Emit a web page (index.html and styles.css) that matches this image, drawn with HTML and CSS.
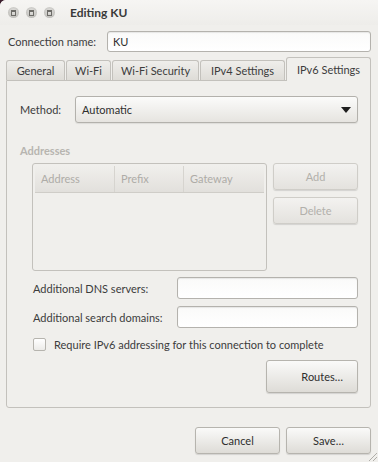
FILE: index.html
```html
<!DOCTYPE html>
<html lang="en">
<head>
    <meta charset="UTF-8">
    <title>Editing KU</title>
    <link rel="stylesheet" href="styles.css">
</head>
<body>
    <div class="window">
        <div class="titlebar">
            <div class="wbtns">
                <span class="wbtn"></span>
                <span class="wbtn"></span>
                <span class="wbtn"></span>
            </div>
            <span class="title">Editing KU</span>
        </div>

        <div class="namerow">
            <label>Connection name:</label>
            <div class="entry name">KU</div>
        </div>

        <div class="tabs">
            <div class="tab t1">General</div>
            <div class="tab t2">Wi-Fi</div>
            <div class="tab t3">Wi-Fi Security</div>
            <div class="tab t4">IPv4 Settings</div>
            <div class="tab active">IPv6 Settings</div>
        </div>

        <div class="panel">
            <div class="methodrow">
                <label>Method:</label>
                <div class="combo">
                    <span>Automatic</span>
                    <svg width="12" height="8" viewBox="0 0 12 8"><path d="M1 1h10L6 7z" fill="#1e1e1e"/></svg>
                </div>
            </div>

            <div class="heading">Addresses</div>

            <div class="addrs">
                <div class="table">
                    <div class="thead">
                        <div class="th c1">Address</div>
                        <div class="th c2">Prefix</div>
                        <div class="th c3">Gateway</div>
                    </div>
                </div>
                <div class="side">
                    <button class="btn dis">Add</button>
                    <button class="btn dis">Delete</button>
                </div>
            </div>

            <div class="field">
                <label>Additional DNS servers:</label>
                <div class="entry"></div>
            </div>
            <div class="field">
                <label>Additional search domains:</label>
                <div class="entry"></div>
            </div>

            <div class="check">
                <span class="box"></span>
                <span>Require IPv6 addressing for this connection to complete</span>
            </div>

            <div class="routesrow">
                <button class="btn routes">Routes…</button>
            </div>
        </div>

        <div class="actions">
            <button class="btn act">Cancel</button>
            <button class="btn act">Save…</button>
        </div>
        <div class="grip"></div>
    </div>
</body>
</html>
```

FILE: styles.css
```css
body{
    margin:0;
    padding:0;
    background-color: #3c1f2e;
    font-family: Lato, "Noto Sans", sans-serif;
    font-size: 11px;
    color: #3c3c3c;
}

.window{
    width:378px;
    height:462px;
    background-color: #f0efec;
    border-top-left-radius: 6px;
    position: relative;
    overflow: hidden;
}

.titlebar{
    height:25px;
    display: flex;
    align-items: center;
    background: linear-gradient(#f6f5f3, #eeedea);
}
.wbtns{
    display: flex;
    gap:7px;
    margin-left:8px;
}
.wbtn{
    width:11px;
    height:11px;
    border-radius: 50%;
    background: radial-gradient(circle at 50% 40%, #e4e3e0, #b3b2ae);
    position: relative;
}
.wbtn::after{
    content:"";
    position: absolute;
    left:3px;
    top:3px;
    width:3px;
    height:3px;
    border:1px solid #6d6c68;
    border-top-width: 2px;
}
.title{
    margin-left:15px;
    font-weight: 700;
    font-size: 12px;
    color:#3a3a3a;
}

.namerow{
    display: flex;
    align-items: center;
    padding: 6px 7px 0 8px;
    height:20px;
}
.namerow label{
    width:99px;
    flex-shrink: 0;
}
.entry{
    flex:1;
    height:19px;
    border:1px solid #b4b2ad;
    border-radius: 3px;
    background: linear-gradient(#fafaf9, #ffffff);
    box-shadow: inset 0 1px 1px rgba(0,0,0,0.08);
    padding-left:5px;
    line-height:19px;
    color:#2e2e2e;
}

.tabs{
    display: flex;
    align-items: flex-end;
    margin:6px 0 0 6px;
    height:23px;
    position: relative;
    z-index: 2;
}
.tab{
    height:20px;
    line-height:20px;
    border:1px solid #c3c1bc;
    border-bottom: none;
    border-radius: 3px 3px 0 0;
    background: linear-gradient(#efeeeb, #dedcd7);
    margin-right:1px;
    text-align: center;
    color:#3c3c3c;
    box-sizing: border-box;
}
.t1{ width:59px; }
.t2{ width:45px; }
.t3{ width:87px; }
.t4{ width:85px; }
.tab.active{
    width:85px;
    height:24px;
    line-height:24px;
    background: #f0efec;
    margin-bottom:-1px;
}

.panel{
    margin:0 7px 0 6px;
    height:328px;
    border:1px solid #c3c1bc;
    border-radius: 0 0 3px 3px;
    box-sizing: border-box;
    padding:15px 12px 0 13px;
}

.methodrow{
    display: flex;
    align-items: center;
}
.methodrow label{
    width:55px;
    flex-shrink: 0;
}
.combo{
    flex:1;
    height:27px;
    box-sizing: border-box;
    border:1px solid #b3b1ac;
    border-radius: 3px;
    background: linear-gradient(#fbfbfa, #e6e4e0);
    box-shadow: 0 1px 1px rgba(0,0,0,0.08);
    display: flex;
    align-items: center;
    justify-content: space-between;
    padding:0 5px 0 6px;
    color:#2e2e2e;
}

.heading{
    margin-top:21px;
    font-weight: 700;
    color:#b7b5b0;
}

.addrs{
    display: flex;
    gap:6px;
    margin:6px 0 0 12px;
}
.table{
    width:235px;
    height:108px;
    box-sizing: border-box;
    border:1px solid #c3c1bc;
    border-radius: 3px;
    padding:2px 2px 0 2px;
}
.thead{
    display: flex;
    height:26px;
    background: linear-gradient(#f0efec, #e2e0dc);
    border-bottom:1px solid #cfcdc8;
}
.th{
    color:#aeaca7;
    padding-left:6px;
    line-height:26px;
    box-sizing: border-box;
}
.c1{ width:80px; border-right:1px solid #d6d4cf; }
.c2{ width:69px; border-right:1px solid #d6d4cf; }
.c3{ flex:1; }

.side{
    display: flex;
    flex-direction: column;
    gap:7px;
}
.btn{
    font-family: inherit;
    font-size: 11px;
    border:1px solid #b6b4ae;
    border-radius: 3px;
    background: linear-gradient(#fafaf9, #dedcd7);
    box-shadow: 0 1px 1px rgba(0,0,0,0.12);
    color:#2e2e2e;
    padding:0;
}
.side .btn{
    width:85px;
    height:27px;
}
.btn.dis{
    color:#b2b0ab;
    border-color:#cfcdc8;
    background: linear-gradient(#f3f2f0, #e4e2de);
}

.field{
    display: flex;
    align-items: center;
    margin:7px 0 0 13px;
}
.field label{
    width:144px;
    flex-shrink: 0;
    white-space: nowrap;
}
.field .entry{
    flex:1;
    height:20px;
}
.addrs + .field{
    margin-top:6px;
}

.check{
    display: flex;
    align-items: center;
    margin:10px 0 0 13px;
    gap:8px;
    white-space: nowrap;
}
.box{
    width:11px;
    height:11px;
    border:1px solid #b6b4ae;
    border-radius: 2px;
    background: linear-gradient(#ffffff, #ecebe8);
}

.routesrow{
    display: flex;
    justify-content: flex-end;
    margin-top:9px;
}
.btn.routes{
    width:92px;
    height:33px;
    text-align: right;
    padding-right:14px;
}

.actions{
    display: flex;
    justify-content: flex-end;
    gap:6px;
    margin:19px 7px 0 0;
}
.btn.act{
    width:85px;
    height:27px;
}

.grip{
    position: absolute;
    right:1px;
    bottom:1px;
    width:8px;
    height:8px;
    background: linear-gradient(135deg, transparent 45%, #b0aea9 46%, #b0aea9 55%, transparent 56%, transparent 70%, #b0aea9 71%, #b0aea9 80%, transparent 81%);
}
```
